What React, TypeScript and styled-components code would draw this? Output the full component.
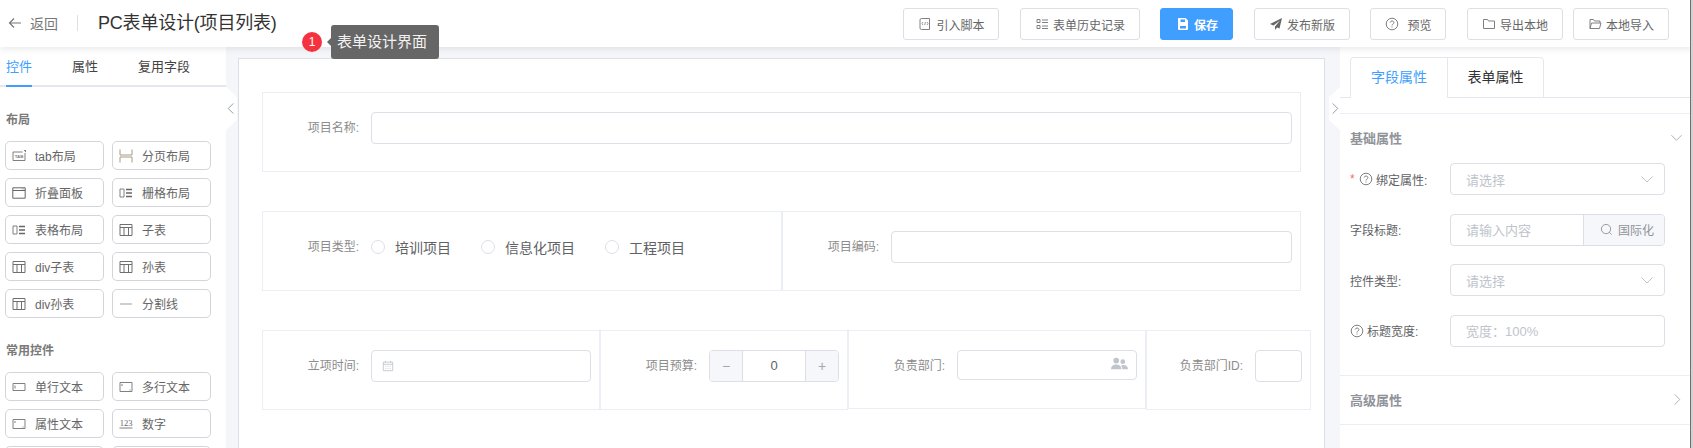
import React from 'react';
import styled, { createGlobalStyle } from 'styled-components';

const GlobalStyle = createGlobalStyle`
  html, body {
    margin: 0;
    height: 100%;
    overflow: hidden;
    background: #fff;
  }
  * { box-sizing: border-box; }
  body {
    font-family: "Liberation Sans", "Noto Sans CJK SC", sans-serif;
    color: #606266;
  }
`;

const Page = styled.div`
  position: relative;
  display: flex;
  flex-direction: column;
  width: 1693px;
  height: 448px;
  overflow: hidden;
`;

const WindowEdge = styled.div`
  position: absolute;
  top: 0;
  right: 0;
  bottom: 0;
  width: 3px;
  z-index: 5;
  background: #d2d2d2;
  border-left: 1px solid #6f6f6f;
`;

/* ---------- header ---------- */

const Header = styled.header`
  position: relative;
  z-index: 2;
  flex: 0 0 47px;
  display: flex;
  align-items: flex-start;
  background: #fff;
  box-shadow: 0 2px 7px rgba(0, 0, 0, 0.09);
`;

const BackLink = styled.div`
  display: flex;
  align-items: center;
  gap: 8px;
  height: 46px;
  padding-left: 8px;
  font-size: 14px;
  color: #777;
`;

const HeaderDivider = styled.span`
  width: 1px;
  height: 16px;
  margin: 15px 20px 0 19px;
  background: #dcdfe6;
`;

const PageTitle = styled.h1`
  margin: 0;
  font-size: 18px;
  font-weight: 400;
  line-height: 46px;
  letter-spacing: -0.2px;
  color: #333;
`;

const Toolbar = styled.div`
  display: flex;
  gap: 20.5px;
  margin-left: auto;
  margin-right: 24px;
  padding-top: 8px;
`;

const ToolButton = styled.button<{ $primary?: boolean; $tight?: boolean; $wide?: boolean }>`
  display: flex;
  align-items: center;
  justify-content: center;
  gap: ${p => (p.$wide ? 8 : 4)}px;
  height: 32px;
  padding: 0 ${p => (p.$primary ? 14.5 : 14)}px;
  margin-left: ${p => (p.$tight ? -10.5 : 0)}px;
  border: 1px solid ${p => (p.$primary ? '#409eff' : '#dcdfe6')};
  border-radius: 3px;
  background: ${p => (p.$primary ? '#409eff' : '#fff')};
  color: ${p => (p.$primary ? '#fff' : '#666')};
  font: inherit;
  font-size: 12px;
  font-weight: ${p => (p.$primary ? 700 : 400)};
`;

/* ---------- layout ---------- */

const Body = styled.main`
  flex: 1;
  display: flex;
  min-height: 0;
  background: #f5f6fa;
`;

const Gutter = styled.div<{ $width: number; $right?: boolean }>`
  flex: 0 0 ${p => p.$width}px;
  display: flex;
  justify-content: ${p => (p.$right ? 'flex-end' : 'flex-start')};
  padding-top: 40px;
`;

const CollapseTab = styled.div<{ $right?: boolean }>`
  display: flex;
  align-items: center;
  justify-content: center;
  width: 11px;
  height: 43px;
  background: #fff;
  clip-path: ${p =>
    p.$right
      ? 'polygon(0 10px, 100% 0, 100% 100%, 0 33px)'
      : 'polygon(0 0, 100% 10px, 100% 33px, 0 100%)'};
`;

/* ---------- left panel ---------- */

const LeftPanel = styled.aside`
  flex: 0 0 226px;
  background: #fff;
  overflow: hidden;
`;

const PanelTabs = styled.div`
  display: flex;
  gap: 40px;
  height: 40px;
  padding-left: 6px;
  border-bottom: 2px solid #e4e7ed;
`;

const PanelTab = styled.div<{ $active?: boolean }>`
  height: 40px;
  font-size: 13px;
  line-height: 39px;
  color: ${p => (p.$active ? '#409eff' : '#444')};
  border-bottom: 2px solid ${p => (p.$active ? '#409eff' : 'transparent')};
`;

const GroupTitle = styled.div`
  margin: 23px 0 11px 6px;
  font-size: 12px;
  font-weight: 700;
  line-height: 20px;
  color: #7a7a7a;
`;

const WidgetGrid = styled.div`
  display: grid;
  grid-template-columns: 99px 99px;
  gap: 8px;
  padding-left: 5px;
`;

const WidgetItem = styled.div`
  display: flex;
  align-items: center;
  gap: 9px;
  height: 29px;
  padding-left: 6px;
  border: 1px solid #d3d5da;
  border-radius: 5px;
  font-size: 12px;
  color: #666;
  white-space: nowrap;
`;

/* ---------- canvas ---------- */

const Canvas = styled.section`
  flex: 0 0 1087px;
  margin-top: 11px;
  padding: 33px 0 0 23px;
  background: #fff;
  border: 1px solid #dcdfe6;
  border-bottom: 0;
`;

const FormRow = styled.div<{ $columns: string }>`
  display: grid;
  grid-template-columns: ${p => p.$columns};
  margin-bottom: 39px;
`;

const FormCell = styled.div`
  display: flex;
  align-items: flex-start;
  height: 80px;
  padding: 19px 8px 0 0;
  border: 1px solid #ebeef5;
`;

const DeptCell = styled(FormCell)`
  height: 79px;
`;

const FieldLabel = styled.label`
  flex: 0 0 96px;
  margin-right: 12px;
  font-size: 12px;
  line-height: 32px;
  text-align: right;
  color: #8c8c8c;
  white-space: nowrap;
`;

const TextBox = styled.div`
  flex: 1;
  display: flex;
  align-items: center;
  height: 32px;
  padding: 0 10px;
  border: 1px solid #dcdfe6;
  border-radius: 4px;
  background: #fff;
`;

const PickerBox = styled(TextBox)`
  justify-content: flex-end;
  height: 30px;
  padding-right: 8px;
`;

const RadioGroup = styled.div`
  display: flex;
  align-items: center;
  gap: 30px;
  height: 32px;
`;

const RadioOption = styled.span`
  display: flex;
  align-items: center;
  gap: 10px;
  font-size: 14px;
  color: #606266;
`;

const RadioDot = styled.i`
  width: 14px;
  height: 14px;
  border: 1px solid #dcdfe6;
  border-radius: 50%;
`;

const NumberBox = styled.div`
  flex: 1;
  display: flex;
  height: 32px;
  border: 1px solid #dcdfe6;
  border-radius: 4px;
  overflow: hidden;
`;

const NumberStep = styled.span<{ $side: 'left' | 'right' }>`
  flex: 0 0 33px;
  display: flex;
  align-items: center;
  justify-content: center;
  background: #f5f7fa;
  font-size: 14px;
  color: #a6a9ad;
  ${p => (p.$side === 'left' ? 'border-right' : 'border-left')}: 1px solid #dcdfe6;
`;

const NumberValue = styled.span`
  flex: 1;
  font-size: 13px;
  line-height: 29px;
  text-align: center;
  color: #606266;
`;

/* ---------- right panel ---------- */

const RightPanel = styled.aside`
  flex: 1;
  background: #fff;
  overflow: hidden;
`;

const PropTabs = styled.div`
  display: flex;
  align-items: flex-end;
  height: 51px;
  padding-left: 10px;
  border-bottom: 1px solid #e4e7ed;
`;

const PropTab = styled.div<{ $active?: boolean; $first?: boolean }>`
  width: ${p => (p.$first ? 98 : 97)}px;
  height: 41px;
  margin-bottom: -1px;
  margin-left: ${p => (p.$first ? 0 : -1)}px;
  border: 1px solid #e4e7ed;
  border-bottom-color: ${p => (p.$active ? '#fff' : '#e4e7ed')};
  border-radius: ${p => (p.$first ? '4px 0 0 0' : '0 4px 0 0')};
  font-size: 14px;
  line-height: 39px;
  text-align: center;
  color: ${p => (p.$active ? '#409eff' : '#333')};
`;

const CollapseHeader = styled.div<{ $height: number; $top?: boolean }>`
  display: flex;
  align-items: center;
  justify-content: space-between;
  height: ${p => p.$height}px;
  margin-top: ${p => (p.$top ? 15 : 0)}px;
  padding: 0 10px ${p => (p.$top ? 3 : 0)}px 10px;
  font-size: 13px;
  font-weight: 700;
  color: #909399;
  ${p => (p.$top ? 'border-top: 1px solid #ebeef5;' : 'border-bottom: 1px solid #ebeef5;')}
`;

const CollapseBody = styled.div`
  padding: 0 0 9.6px 10px;
  border-bottom: 1px solid #ebeef5;
`;

const PropRow = styled.div`
  display: flex;
  align-items: center;
  margin-bottom: 18.6px;
`;

const PropLabel = styled.div`
  flex: 0 0 100px;
  display: flex;
  align-items: center;
  gap: 3px;
  font-size: 12px;
  color: #606266;
  white-space: nowrap;
`;

const Required = styled.span`
  width: 6px;
  color: #f56c6c;
`;

const PropBox = styled.div`
  flex: 0 0 215px;
  display: flex;
  height: 32px;
  border: 1px solid #dcdfe6;
  border-radius: 4px;
  overflow: hidden;
`;

const Placeholder = styled.span`
  flex: 1;
  display: flex;
  align-items: center;
  justify-content: space-between;
  padding: 0 10px 0 15px;
  font-size: 13px;
  color: #c0c4cc;
`;

const AppendButton = styled.span`
  flex: 0 0 81px;
  display: flex;
  align-items: center;
  gap: 5px;
  padding-left: 16px;
  background: #f5f7fa;
  border-left: 1px solid #dcdfe6;
  font-size: 12px;
  color: #909399;
`;

/* ---------- tooltip overlay ---------- */

const StepBadge = styled.span`
  position: absolute;
  left: 302px;
  top: 32px;
  z-index: 4;
  width: 20px;
  height: 20px;
  border-radius: 50%;
  background: #f5333f;
  font-size: 12px;
  line-height: 20px;
  text-align: center;
  color: #fff;
`;

const StepTip = styled.div`
  position: absolute;
  left: 331px;
  top: 25px;
  z-index: 4;
  width: 108px;
  height: 34px;
  padding-left: 6px;
  border-radius: 3px;
  background: #666;
  font-size: 15px;
  line-height: 34px;
  color: #f2f2f2;

  &::before {
    content: '';
    position: absolute;
    left: -4px;
    top: 13px;
    border-style: solid;
    border-width: 4px 4px 4px 0;
    border-color: transparent #666 transparent transparent;
  }
`;

/* ---------- icons ---------- */

const Svg = styled.svg<{ $color?: string }>`
  flex: none;
  display: block;
  fill: none;
  stroke: ${p => p.$color ?? '#808080'};
  stroke-width: 1;
`;

type IconProps = { size?: number; color?: string };

const make =
  (body: React.ReactNode, box = 14) =>
  ({ size = 14, color }: IconProps) =>
    (
      <Svg $color={color} width={size} height={size} viewBox={`0 0 ${box} ${box}`}>
        {body}
      </Svg>
    );

const BackIcon = make(<path d="M13 7H1.500M6 2.500 1.500 7 6 11.500" strokeWidth="1.200" />);
const ChevronLeft = make(<path d="M9 1.500 3.500 7 9 12.500" />);
const ChevronRight = make(<path d="M5 1.500 10.500 7 5 12.500" />);
const ChevronDown = make(<path d="M1.500 4.500 7 10l5.500-5.500" />);

const ScriptIcon = make(
  <>
    <path d="M3.500 1.500h8v11h-8a1.500 1.500 0 0 1-1.500-1.500V3a1.500 1.500 0 0 1 1.500-1.500z" />
    <path d="M5 5 4 6.500 5 8M7.500 5l-.8 3M9 5l1 1.500L9 8" strokeWidth="0.8" />
  </>,
);
const ListIcon = make(
  <>
    <path d="M2 2.500h3v3H2zM2 8.500h3v3H2z" />
    <path d="M7 3h6M7 5.500h6M7 9h6M7 11.500h6" />
  </>,
);
const SaveIcon = make(
  <path
    d="M2.500 1h7L12 3.500V12a1 1 0 0 1-1 1H3a1 1 0 0 1-1-1V1.500zM4.500 2.500V5h4.500V2.500zM4 9v2.500h6V9z"
    fill="#fff"
    fillRule="evenodd"
    stroke="none"
  />,
);
const SendIcon = make(
  <path d="M13 1 1 7l3.500 1.500L11 3.500 6 9.500V13l2-2.500 2.500 1z" fill="#666" stroke="none" />,
);
const HelpIcon = make(
  <>
    <circle cx="7" cy="7" r="5.800" />
    <path d="M5.200 5.500A1.900 1.900 0 0 1 7 4c1.100 0 1.900.7 1.900 1.700 0 1.400-1.900 1.300-1.900 2.800" />
    <path d="M7 9.500v1" />
  </>,
);
const FolderIcon = make(<path d="M1.500 2.500h4l1 1.500h6v7.500h-11z" />);
const FolderOpenIcon = make(<path d="M2 2.500h3.500l1 1.500h5.500v2M2 11.500v-9M2 11.500h9.500l1.500-5.500H3.500z" />);

const TabIcon = make(
  <>
    <path d="M1 3h9.500M1 3v8.500h12V4" />
    <path d="M12 1.500h1.500V3" strokeWidth="1.200" />
    <text x="7" y="9.300" fontSize="4.400" fill="#808080" stroke="none" textAnchor="middle" fontWeight="700">
      TAB
    </text>
  </>,
);
const PageIcon = make(<path d="M1 .5V6h12V.5M1 13.500V8h12v5.500" stroke="#a79a85" />);
const PanelIcon = make(
  <>
    <path d="M.8 1.800h12.400v10.400H.8zM.8 4.500h12.400" stroke="#666" />
    <path d="M10 3.500l1-1 1 1" strokeWidth="0.8" />
  </>,
);
const GridIcon = make(
  <>
    <path d="M1 3h4v8H1z" />
    <path d="M7 3.500h6M7 7h6M7 10.500h6" strokeWidth="1.300" stroke="#666" />
  </>,
);
const TableIcon = make(
  <path d="M1 1.500h12v11H1zM1 4.500h12M5 4.500v8M9.500 4.500v8" stroke="#6f6f6f" />,
);
const LineIcon = make(<path d="M1 7h12" stroke="#bbb" strokeWidth="1.400" />);
const InputIcon = make(
  <>
    <path d="M1 3.500h12v7H1z" />
    <path d="M3 5.500v3" />
  </>,
);
const TextAreaIcon = make(
  <>
    <path d="M1 2.500h12v9H1z" />
    <path d="M3 4v2M11 9.500v1" />
  </>,
);
const NumberIcon = make(
  <>
    <text x="7" y="8.800" fontSize="8.500" fill="#666" stroke="none" textAnchor="middle" fontFamily="Liberation Serif, serif">
      123
    </text>
    <path d="M.5 11h13" />
  </>,
);
const CalendarIcon = make(
  <path d="M1.500 2.500h11v10h-11zM1.500 5h11M4 1v2M10 1v2M4 7.500h1M6.500 7.500h1M9 7.500h1M4 10h1M6.500 10h1M9 10h1" stroke="#c0c4cc" />,
);
const UsersIcon = make(
  <g fill="#c0c4cc" stroke="none">
    <circle cx="5.500" cy="3.800" r="3" />
    <circle cx="12.500" cy="5" r="2.500" />
    <path d="M0 13c0-3 2-5 5.500-5s5.500 2 5.500 5z" />
    <path d="M12 13h6c0-2.600-1.700-4.500-5-4.500-1 0-1.800.2-2.400.5 .9.900 1.400 2.400 1.400 4z" />
  </g>,
  18,
);
const SearchIcon = make(
  <>
    <circle cx="6.500" cy="6.500" r="5" />
    <path d="M10 10l2.500 2.500" />
  </>,
);

/* ---------- data ---------- */

const layoutWidgets: [React.FC<IconProps>, string][] = [
  [TabIcon, 'tab布局'],
  [PageIcon, '分页布局'],
  [PanelIcon, '折叠面板'],
  [GridIcon, '栅格布局'],
  [GridIcon, '表格布局'],
  [TableIcon, '子表'],
  [TableIcon, 'div子表'],
  [TableIcon, '孙表'],
  [TableIcon, 'div孙表'],
  [LineIcon, '分割线'],
];

const commonWidgets: [React.FC<IconProps>, string][] = [
  [InputIcon, '单行文本'],
  [TextAreaIcon, '多行文本'],
  [TextAreaIcon, '属性文本'],
  [NumberIcon, '数字'],
];

const App: React.FC = () => {
  return (
    <Page>
      <GlobalStyle />
      <Header>
        <BackLink>
          <BackIcon color="#777" />
          返回
        </BackLink>
        <HeaderDivider />
        <PageTitle>PC表单设计(项目列表)</PageTitle>
        <Toolbar>
          <ToolButton><ScriptIcon />引入脚本</ToolButton>
          <ToolButton><ListIcon />表单历史记录</ToolButton>
          <ToolButton $primary><SaveIcon />保存</ToolButton>
          <ToolButton><SendIcon />发布新版</ToolButton>
          <ToolButton $wide><HelpIcon />预览</ToolButton>
          <ToolButton><FolderIcon />导出本地</ToolButton>
          <ToolButton $tight><FolderOpenIcon />本地导入</ToolButton>
        </Toolbar>
      </Header>

      <Body>
        <LeftPanel>
          <PanelTabs>
            <PanelTab $active>控件</PanelTab>
            <PanelTab>属性</PanelTab>
            <PanelTab>复用字段</PanelTab>
          </PanelTabs>
          <GroupTitle>布局</GroupTitle>
          <WidgetGrid>
            {layoutWidgets.map(([Icon, name]) => (
              <WidgetItem key={name}><Icon />{name}</WidgetItem>
            ))}
          </WidgetGrid>
          <GroupTitle>常用控件</GroupTitle>
          <WidgetGrid>
            {commonWidgets.map(([Icon, name]) => (
              <WidgetItem key={name}><Icon />{name}</WidgetItem>
            ))}
            <WidgetItem />
            <WidgetItem />
          </WidgetGrid>
        </LeftPanel>

        <Gutter $width={12}>
          <CollapseTab><ChevronLeft size={13} color="#909399" /></CollapseTab>
        </Gutter>

        <Canvas>
          <FormRow $columns="1039px">
            <FormCell>
              <FieldLabel>项目名称:</FieldLabel>
              <TextBox />
            </FormCell>
          </FormRow>

          <FormRow $columns="520px 519px">
            <FormCell>
              <FieldLabel>项目类型:</FieldLabel>
              <RadioGroup>
                <RadioOption><RadioDot />培训项目</RadioOption>
                <RadioOption><RadioDot />信息化项目</RadioOption>
                <RadioOption><RadioDot />工程项目</RadioOption>
              </RadioGroup>
            </FormCell>
            <FormCell>
              <FieldLabel>项目编码:</FieldLabel>
              <TextBox />
            </FormCell>
          </FormRow>

          <FormRow $columns="338px 248px 298px 165px">
            <FormCell>
              <FieldLabel>立项时间:</FieldLabel>
              <TextBox><CalendarIcon size={12} /></TextBox>
            </FormCell>
            <FormCell>
              <FieldLabel>项目预算:</FieldLabel>
              <NumberBox>
                <NumberStep $side="left">−</NumberStep>
                <NumberValue>0</NumberValue>
                <NumberStep $side="right">+</NumberStep>
              </NumberBox>
            </FormCell>
            <DeptCell>
              <FieldLabel>负责部门:</FieldLabel>
              <PickerBox><UsersIcon size={17} /></PickerBox>
            </DeptCell>
            <FormCell>
              <FieldLabel>负责部门ID:</FieldLabel>
              <TextBox />
            </FormCell>
          </FormRow>
        </Canvas>

        <Gutter $width={15} $right>
          <CollapseTab $right><ChevronRight size={13} color="#909399" /></CollapseTab>
        </Gutter>

        <RightPanel>
          <PropTabs>
            <PropTab $active $first>字段属性</PropTab>
            <PropTab>表单属性</PropTab>
          </PropTabs>
          <CollapseHeader $height={50} $top>
            基础属性
            <ChevronDown size={13} color="#a8abb2" />
          </CollapseHeader>
          <CollapseBody>
            <PropRow>
              <PropLabel>
                <Required>*</Required>
                <HelpIcon />
                绑定属性:
              </PropLabel>
              <PropBox>
                <Placeholder>请选择<ChevronDown color="#c0c4cc" /></Placeholder>
              </PropBox>
            </PropRow>
            <PropRow>
              <PropLabel>字段标题:</PropLabel>
              <PropBox>
                <Placeholder>请输入内容</Placeholder>
                <AppendButton><SearchIcon size={13} color="#909399" />国际化</AppendButton>
              </PropBox>
            </PropRow>
            <PropRow>
              <PropLabel>控件类型:</PropLabel>
              <PropBox>
                <Placeholder>请选择<ChevronDown color="#c0c4cc" /></Placeholder>
              </PropBox>
            </PropRow>
            <PropRow>
              <PropLabel>
                <HelpIcon />
                标题宽度:
              </PropLabel>
              <PropBox>
                <Placeholder>宽度：100%</Placeholder>
              </PropBox>
            </PropRow>
          </CollapseBody>
          <CollapseHeader $height={49}>
            高级属性
            <ChevronRight size={13} color="#a8abb2" />
          </CollapseHeader>
        </RightPanel>
      </Body>

      <StepBadge>1</StepBadge>
      <StepTip>表单设计界面</StepTip>
      <WindowEdge />
    </Page>
  );
};

export default App;
